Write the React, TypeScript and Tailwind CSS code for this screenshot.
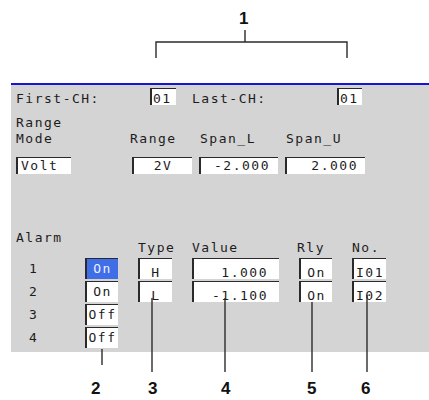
import React from "react";

const Box: React.FC<{ className: string; children?: React.ReactNode }> = ({ className, children }) => (
  <div className={`h-full flex items-end bg-white border-t border-l-2 border-[#2a2a2a] leading-[12px] ${className}`}>
    {children}
  </div>
);

const alarms = [
  { n: "1", on: "On", active: true, type: "H", value: "1.000", rly: "On", no: "I01" },
  { n: "2", on: "On", active: false, type: "L", value: "-1.100", rly: "On", no: "I02" },
  { n: "3", on: "Off", active: false },
  { n: "4", on: "Off", active: false },
];

const labels = [
  { t: "2", x: "left-[91px]" },
  { t: "3", x: "left-[148px]" },
  { t: "4", x: "left-[221px]" },
  { t: "5", x: "left-[307px]" },
  { t: "6", x: "left-[361px]" },
];

export default function App() {
  return (
    <div className="relative w-[429px] h-[400px] bg-white overflow-hidden font-['DejaVu_Sans_Mono',monospace] text-[13px] tracking-[1.5px] text-[#1c1c1c]">
      <div className="h-[83px]" />
      <div className="ml-[11px] h-[269px] bg-[#d4d4d4] border-t-2 border-[#1515d8] pl-[5px]">
        {/* channel row */}
        <div className="flex items-end h-[17px] mt-[3px] leading-[12px]">
          <span className="w-[134px]">First-CH:</span>
          <Box className="w-[26px] pl-[1px]">01</Box>
          <span className="ml-[16px] w-[145px]">Last-CH:</span>
          <Box className="w-[25px] pl-[1px]">01</Box>
        </div>

        <div className="mt-[12px] h-[12px] leading-[12px]">Range</div>
        <div className="mt-[4px] h-[12px] leading-[12px] flex">
          <span className="w-[114px]">Mode</span>
          <span className="w-[70px]">Range</span>
          <span className="w-[86px]">Span_L</span>
          <span>Span_U</span>
        </div>
        <div className="mt-[12px] h-[17px] flex">
          <Box className="w-[55px] pl-[3px] pb-[2px]">Volt</Box>
          <Box className="ml-[61px] w-[60px] justify-center pb-[2px]">2V</Box>
          <Box className="ml-[7px] w-[79px] justify-end pr-[8px] pb-[2px]">-2.000</Box>
          <Box className="ml-[7px] w-[80px] justify-end pr-[7px] pb-[2px]">2.000</Box>
        </div>

        {/* alarm block */}
        <div className="mt-[58px] h-[26px] flex leading-[12px]">
          <span className="w-[122px]">Alarm</span>
          <span className="w-[54px] pt-[10px]">Type</span>
          <span className="w-[105px] pt-[10px]">Value</span>
          <span className="w-[55px] pt-[10px]">Rly</span>
          <span className="pt-[10px]">No.</span>
        </div>
        <div className="flex flex-col gap-[2px]">
          {alarms.map((a) => (
            <div key={a.n} className="flex h-[21px] items-center">
              <span className="w-[69px] pl-[13px] leading-[12px]">{a.n}</span>
              <div
                className={`h-full w-[33px] flex items-center justify-center border-t border-l-2 border-[#2a2a2a] leading-[12px] ${
                  a.active ? "bg-[#3f6ee6] text-[#eef2ff]" : "bg-white"
                }`}
              >
                {a.on}
              </div>
              {a.type && (
                <>
                  <Box className="ml-[20px] w-[34px] items-center justify-center">{a.type}</Box>
                  <Box className="ml-[20px] w-[87px] items-center justify-end pr-[11px]">{a.value}</Box>
                  <Box className="ml-[20px] w-[33px] items-center justify-center">{a.rly}</Box>
                  <Box className="ml-[20px] w-[34px] items-center pl-[2px]">{a.no}</Box>
                </>
              )}
            </div>
          ))}
        </div>
      </div>

      {/* callouts */}
      <svg className="absolute left-0 top-0 pointer-events-none" width="429" height="400" viewBox="0 0 429 400">
        <g stroke="#2b2b2b" strokeWidth="1.4" fill="none">
          <path d="M245 30 V42 M156 58 V42 H347 V58" />
          <path d="M102 349 V365" />
          <path d="M152 298 V372" />
          <path d="M225 298 V372" />
          <path d="M312 302 V372" />
          <path d="M367 295 V372" />
        </g>
      </svg>
      <div className="absolute left-[239px] top-[9px] font-['Liberation_Sans',Arial,sans-serif] font-bold text-[17px] leading-[20px] tracking-normal text-[#111]">
        1
      </div>
      {labels.map((l) => (
        <div
          key={l.t}
          className={`absolute top-[379px] ${l.x} font-['Liberation_Sans',Arial,sans-serif] font-bold text-[17px] leading-[20px] tracking-normal text-[#111]`}
        >
          {l.t}
        </div>
      ))}
    </div>
  );
}
